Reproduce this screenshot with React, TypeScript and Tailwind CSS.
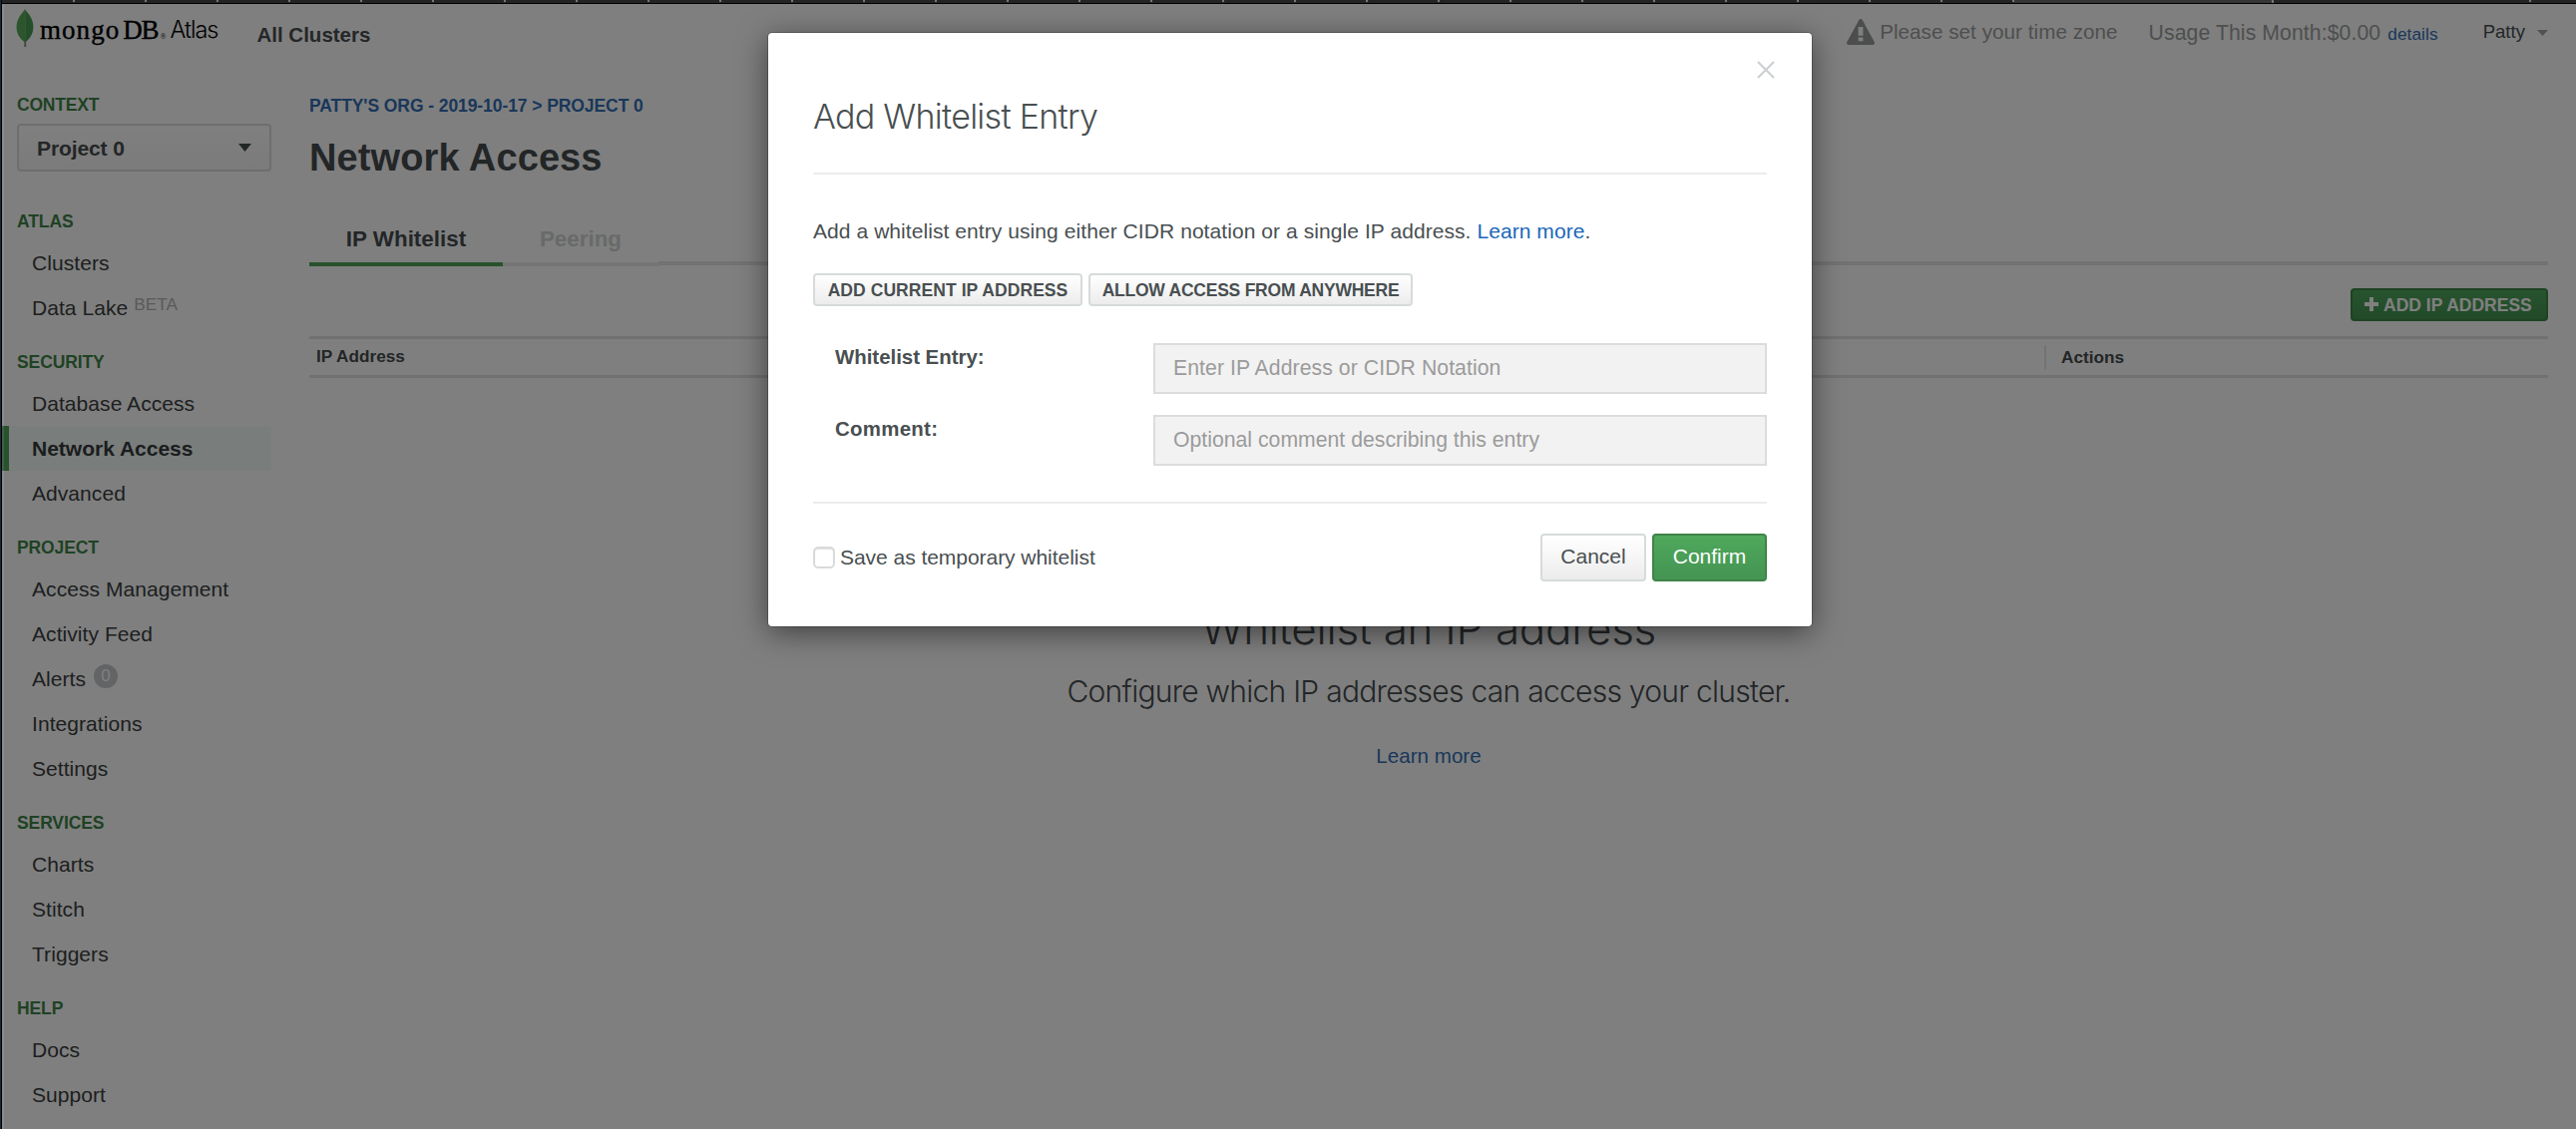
import React from "react";

type NavItem = { label: string; active?: boolean; tag?: string; count?: number };
type NavSection = { title: string; items: NavItem[] };

const sections: NavSection[] = [
  { title: "ATLAS", items: [{ label: "Clusters" }, { label: "Data Lake", tag: "BETA" }] },
  {
    title: "SECURITY",
    items: [{ label: "Database Access" }, { label: "Network Access", active: true }, { label: "Advanced" }],
  },
  {
    title: "PROJECT",
    items: [
      { label: "Access Management" },
      { label: "Activity Feed" },
      { label: "Alerts", count: 0 },
      { label: "Integrations" },
      { label: "Settings" },
    ],
  },
  { title: "SERVICES", items: [{ label: "Charts" }, { label: "Stitch" }, { label: "Triggers" }] },
  { title: "HELP", items: [{ label: "Docs" }, { label: "Support" }] },
];

function BrowserTabs() {
  return (
    <div className="flex h-[4px] border-b border-black bg-[#242424] pl-px">
      {Array.from({ length: 28 }, (_, i) => (
        <div key={i} className="h-[2px] w-[72px] shrink-0 border-r-2 border-[#777777]" />
      ))}
      <div className="h-[3px] w-[260px] shrink-0 border-r-2 border-[#777777] bg-[#363636]" />
      <div className="h-[2px] w-[258px] shrink-0 border-r-2 border-[#777777]" />
    </div>
  );
}

function Logo() {
  return (
    <div className="flex items-start text-black">
      <svg className="mt-[5px] h-[38px] w-[18px]" viewBox="0 0 18 38">
        <path d="M8.2 30h1.8l.4 8H8.2z" fill="#9a9488" />
        <path d="M9 0c.6 1.600 1.600 2.400 2.700 3.700C15.500 8.200 17.800 13.500 17.300 19.500c-.5 6-3.600 10.500-8.100 14.100V0z" fill="#499a53" />
        <path d="M9 0c-.5 1.600-1.500 2.400-2.600 3.700C2.600 8.200.3 13.500.6 19.500c.4 6 3.600 10.500 8.600 14.100V0z" fill="#58aa5c" />
      </svg>
      <div className="ml-[6px] flex items-baseline pt-[9px] font-['Liberation_Serif',serif] text-[27px] leading-[34px] [-webkit-text-stroke:0.4px_#000]">
        <span className="tracking-[1.05px]">mongo</span>
        <span className="ml-[3px] tracking-[-1.2px]">DB</span>
        <span className="ml-[2px] text-[8px] [-webkit-text-stroke:0px]">®</span>
      </div>
      <span className="ml-[4px] pt-[9px] font-['Inter',sans-serif] text-[23.5px] font-light leading-[34px] tracking-[-1px]">Atlas</span>
    </div>
  );
}

function Header() {
  return (
    <header className="flex h-[76px] items-start pr-[28px] pl-[14px]">
      <Logo />
      <span className="ml-[39px] pt-[16px] text-[20.5px] font-bold leading-[30px] text-[#494f51]">All Clusters</span>
      <div className="ml-auto flex items-start text-[#9a9e9e]">
        <svg className="mt-[15px] h-[26px] w-[28px]" viewBox="0 0 28 26">
          <path
            fillRule="evenodd"
            fill="#989c9c"
            d="M12.300 1a2 2 0 0 1 3.400 0l12 22a2 2 0 0 1-1.700 3H2a2 2 0 0 1-1.700-3zM11.600 8v8.800h4.800V8zM11.600 18.400v3.800h4.800v-3.800z"
          />
        </svg>
        <span className="ml-[5px] pt-[13px] text-[20.6px] leading-[30px] tracking-[0.06px]">Please set your time zone</span>
        <span className="ml-[31px] pt-[14px] text-[21.2px] leading-[30px] tracking-[0.1px]">Usage This Month:$0.00</span>
        <a className="ml-[7px] pt-[15px] text-[17.2px] leading-[30px] tracking-[0.1px] text-[#336fb5]">details</a>
        <span className="ml-[45px] pt-[13px] text-[18.6px] leading-[30px] text-[#494f51]">Patty</span>
        <svg className="mt-[26px] ml-[12px] h-[6px] w-[11px]" viewBox="0 0 11 6">
          <path d="M0 0h11L5.500 6z" fill="#a0a4a4" />
        </svg>
      </div>
    </header>
  );
}

function Sidebar() {
  return (
    <aside className="w-[308px] shrink-0 pt-[6px]">
      <h2 className="pl-[15px] text-[17.5px] font-bold leading-[38px] tracking-[-0.2px] text-[#3f8549]">CONTEXT</h2>
      <button className="ml-[15px] flex h-[48px] w-[255px] items-center justify-between rounded-[4px] border-2 border-[#dcdddd] bg-linear-to-b from-white to-[#f6f6f6] pr-[18px] pl-[18px]">
        <span className="pt-px text-[21px] font-bold tracking-[-0.1px] text-[#464c4f]">Project 0</span>
        <svg className="mb-px h-[8px] w-[13px]" viewBox="0 0 13 8">
          <path d="M0 0h13L6.500 8z" fill="#464c4f" />
        </svg>
      </button>
      <nav className="mt-[18px]">
        {sections.map((section) => (
          <section key={section.title}>
            <h2 className="pt-[13px] pl-[15px] text-[17.5px] font-bold leading-[38px] tracking-[-0.1px] text-[#3f8549]">
              {section.title}
            </h2>
            {section.items.map((item) => (
              <a
                key={item.label}
                className={
                  item.active
                    ? "flex h-[45px] w-[270px] items-center border-l-[7px] border-[#4fa55b] bg-[#f2faf6] pl-[23px] text-[21px] font-bold text-[#363a3c]"
                    : "flex h-[45px] w-[270px] items-center pl-[30px] text-[21px] tracking-[0.06px] text-[#3a3e40]"
                }
              >
                {item.label}
                {item.tag && <span className="mb-[5px] ml-[6px] text-[17.2px] text-[#b5b5b5]">{item.tag}</span>}
                {item.count !== undefined && (
                  <span className="mb-[5px] ml-[8px] flex size-[24px] items-center justify-center rounded-full bg-[#c4c8ca] text-[17px] text-white">
                    {item.count}
                  </span>
                )}
              </a>
            ))}
          </section>
        ))}
      </nav>
    </aside>
  );
}

function Main() {
  return (
    <main className="min-w-0 flex-1 pt-[14px] pr-[28px]">
      <div className="text-[17.5px] font-bold leading-[24px] tracking-[-0.08px] text-[#336fb5]">
        PATTY'S ORG - 2019-10-17 &gt; PROJECT 0
      </div>
      <h1 className="mt-[17px] text-[38px] font-bold leading-[46px] tracking-[0.1px] text-[#464c4f]">Network Access</h1>
      <div className="mt-[40px] flex items-start text-center text-[22.4px] font-bold leading-[37px]">
        <div className="h-[46px] w-[194px] border-b-4 border-[#4fa55b] text-[#464c4f]">IP Whitelist</div>
        <div className="h-[46px] w-[156px] border-b-4 border-[#ebebeb] text-[#d0d4d4]">Peering</div>
        <div className="h-[45px] flex-1 border-b-4 border-[#e4e4e4]" />
      </div>
      <div className="mt-[22px] flex justify-end">
        <button className="flex h-[33px] w-[198px] items-center rounded-[4px] border-2 border-[#3f8449] bg-linear-to-b from-[#4fa85c] to-[#449452] pt-px pl-[12px] text-[17.5px] font-bold text-white">
          <svg className="mb-[2px] mr-[5px] size-[14px]" viewBox="0 0 14 14">
            <path d="M5 0h4v5h5v4H9v5H5V9H0V5h5z" fill="#fff" />
          </svg>
          ADD IP ADDRESS
        </button>
      </div>
      <div className="mt-[15px] flex h-[42px] items-center border-y-[3px] border-[#e3e3e3] pl-[7px] text-[17.2px] font-bold text-[#464c4f]">
        <span className="flex-1">IP Address</span>
        <span className="w-[505px] border-l-2 border-[#e6e6e6] pl-[15px] leading-[24px]">Actions</span>
      </div>
      <div className="mt-[225px] flex flex-col items-center text-[#464c4f]">
        <h2 className="font-['Inter',sans-serif] text-[44px] font-light leading-[52px] tracking-[-0.3px]">Whitelist an IP address</h2>
        <p className="mt-[17px] font-['Inter',sans-serif] text-[30px] font-light leading-[40px] tracking-[-0.73px]">
          Configure which IP addresses can access your cluster.
        </p>
        <a className="mt-[30px] text-[20.6px] leading-[30px] text-[#336fb5]">Learn more</a>
      </div>
    </main>
  );
}

const lightButton = "rounded-[4px] border-2 border-[#d6dbdb] bg-linear-to-b from-white to-[#ececec] text-[#494f51]";

function WhitelistDialog() {
  return (
    <div
      role="dialog"
      className="relative h-[595px] w-[1046px] rounded-[4px] bg-white px-[45px] pt-[62px] text-[21px] text-[#494f51] shadow-[0_0_0_1px_rgba(0,0,0,0.2),0_6px_30px_rgba(0,0,0,0.5)]"
    >
      <svg className="absolute top-[28px] right-[37px] size-[18px]" viewBox="0 0 18 18">
        <path d="M1 1l16 16M17 1L1 17" stroke="#cdd0d2" strokeWidth="2.200" />
      </svg>
      <h2 className="border-b-2 border-[#ebeced] pb-[34px] font-['Inter',sans-serif] text-[34px] font-light leading-[44px] tracking-[-0.72px]">
        Add Whitelist Entry
      </h2>
      <p className="mt-[42px] leading-[30px] tracking-[0.07px]">
        Add a whitelist entry using either CIDR notation or a single IP address.{" "}
        <a className="text-[#1a67b8]">Learn more</a>.
      </p>
      <div className="mt-[27px] flex gap-[6px] font-bold">
        <button className={`h-[33px] w-[270px] pt-[2px] text-[17.5px] tracking-[0.07px] ${lightButton}`}>ADD CURRENT IP ADDRESS</button>
        <button className={`h-[33px] w-[325px] pt-[2px] text-[17.5px] tracking-[-0.24px] ${lightButton}`}>ALLOW ACCESS FROM ANYWHERE</button>
      </div>
      <div className="mt-[37px] grid grid-cols-[341px_1fr] gap-y-[21px]">
        <label className="pl-[22px] text-[20.4px] font-bold leading-[29px]">Whitelist Entry:</label>
        <input
          className="h-[51px] border-2 border-[#dcdcdc] bg-[#f2f2f2] pb-[2px] pl-[18px] text-[21.2px] tracking-[0.08px] placeholder:text-[#9b9b9b]"
          placeholder="Enter IP Address or CIDR Notation"
        />
        <label className="pl-[22px] text-[20.4px] font-bold leading-[29px] tracking-[0.3px]">Comment:</label>
        <input
          className="h-[51px] border-2 border-[#dcdcdc] bg-[#f2f2f2] pb-[2px] pl-[18px] text-[21.2px] tracking-[0.02px] placeholder:text-[#9b9b9b]"
          placeholder="Optional comment describing this entry"
        />
      </div>
      <div className="mt-[36px] flex items-center border-t-2 border-[#ebeced] pt-[30px]">
        <span className="size-[22px] rounded-[5px] border-2 border-[#dadada] bg-white shadow-[inset_0_1px_1px_rgba(0,0,0,0.12)]" />
        <span className="ml-[5px] tracking-[-0.04px]">Save as temporary whitelist</span>
        <button className={`ml-auto h-[48px] w-[106px] pb-[2px] ${lightButton}`}>Cancel</button>
        <button className="ml-[6px] h-[48px] w-[115px] rounded-[4px] border-2 border-[#3f8449] bg-linear-to-b from-[#4fa85c] to-[#449452] pb-[2px] text-white">
          Confirm
        </button>
      </div>
    </div>
  );
}

export default function App() {
  return (
    <div className="flex h-[1132px] overflow-hidden font-['Liberation_Sans',Arial,sans-serif]">
      <div className="w-[2px] shrink-0 border-r border-black bg-[#1d2740]" />
      <div className="flex min-w-0 flex-1 flex-col">
        <BrowserTabs />
        <div className="relative min-h-0 flex-1 bg-white">
          <Header />
          <div className="flex">
            <Sidebar />
            <Main />
          </div>
          <div className="absolute inset-0 flex items-start justify-center border-l-2 border-white/10 bg-black/50 bg-clip-border pt-[29px]">
            <WhitelistDialog />
          </div>
        </div>
      </div>
    </div>
  );
}
